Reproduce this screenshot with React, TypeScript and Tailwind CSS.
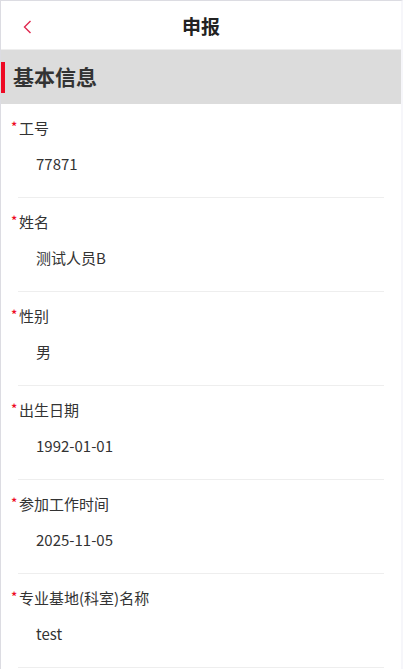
import React from 'react';

const fields = [
  { label: '工号', value: '77871' },
  { label: '姓名', value: '测试人员B' },
  { label: '性别', value: '男' },
  { label: '出生日期', value: '1992-01-01' },
  { label: '参加工作时间', value: '2025-11-05' },
  { label: '专业基地(科室)名称', value: 'test' },
];

const App = () => {
  return (
    <div
      className="min-h-screen bg-white text-[#333] border-t border-l border-[#dcdce2] border-r-2 border-r-[#f6f6fa]"
      style={{ fontFamily: '"Noto Sans CJK SC", sans-serif' }}
    >
      {/* Header */}
      <div className="relative h-[49px] flex items-center justify-center border-b border-[#eeeeee]">
        <button className="absolute left-[15px] top-[2px] h-full w-[22px] flex items-center justify-center">
          <svg width="10" height="16" viewBox="0 0 10 16" fill="none">
            <path d="M8.5 2 L2.5 8 L8.5 14" stroke="#e0284f" strokeWidth="1.4" />
          </svg>
        </button>
        <h1 className="mt-[2px] text-[19px] font-bold text-[#222]">申报</h1>
      </div>

      {/* Section title */}
      <div className="h-[54px] bg-[#dcdcdc] flex items-center">
        <div className="w-[4px] h-[31px] bg-[#ee0a24]" />
        <h2 className="ml-[8px] text-[21px] font-bold text-[#333]">基本信息</h2>
      </div>

      {/* Fields */}
      <div className="px-[17px]">
        {fields.map((f) => (
          <div key={f.label} className="pt-[14px] pb-[23px] border-b border-[#eeeeee]">
            <div className="flex items-start leading-[20px] text-[15px] -ml-[7px]">
              <span className="text-[#ee0a24] text-[13px] leading-[18px] w-[8px] font-medium">*</span>
              <span>{f.label}</span>
            </div>
            <div className="mt-[16px] pl-[18px] leading-[20px] text-[15px]">{f.value}</div>
          </div>
        ))}
      </div>
    </div>
  );
};

export default App;
